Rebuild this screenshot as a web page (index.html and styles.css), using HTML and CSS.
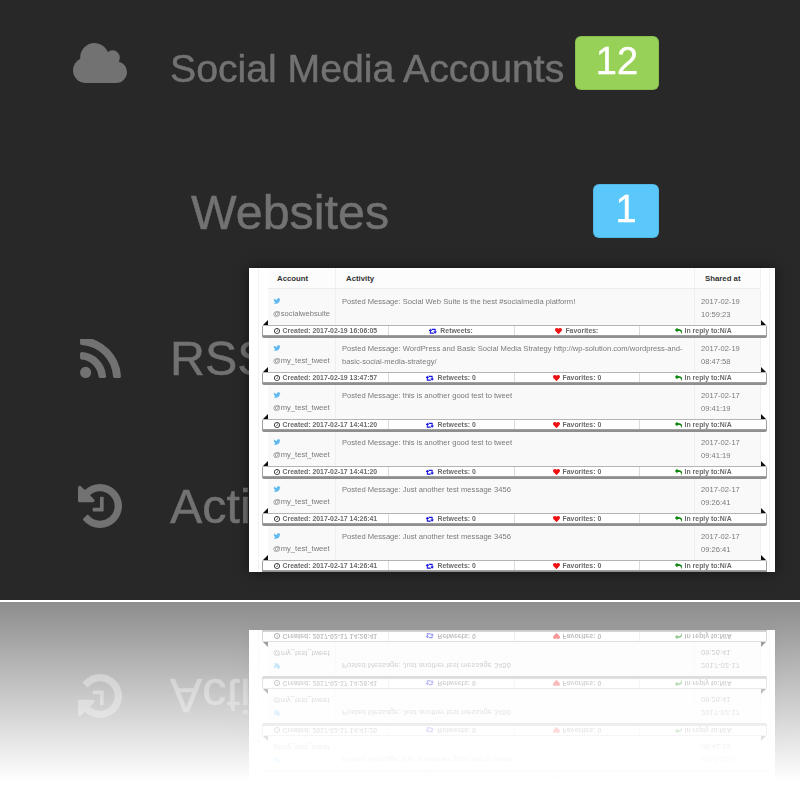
FILE: index.html
```html
<!DOCTYPE html>
<html lang="en">
<head>
    <meta charset="UTF-8">
    <meta name="viewport" content="width=device-width, initial-scale=1.0">
    <title>Social Web Suite</title>
    <link rel="stylesheet" href="styles.css">
</head>
<body>
    <svg class="icon-defs" aria-hidden="true">
        <symbol id="i-cloud" viewBox="0 128 1920 1408" preserveAspectRatio="none"><path d="M1920 1152q0 159-112.500 271.500t-271.500 112.500h-1088q-185 0-316.500-131.500t-131.500-316.500q0-132 71-241.500t187-163.500q-2-28-2-43 0-212 150-362t362-150q158 0 286.500 88t187.500 230q70-62 166-62 106 0 181 75t75 181q0 75-41 138 129 30 213 134.500t84 239.500z"/></symbol>
        <symbol id="i-rss" viewBox="192 192 1408 1344"><path d="M576 1344q0 80-56 136t-136 56-136-56-56-136 56-136 136-56 136 56 56 136zm512 123q2 28-17 48-18 21-47 21h-135q-25 0-43-16.500t-20-41.500q-22-229-184.500-391.500t-391.500-184.500q-25-2-41.500-20t-16.500-43v-135q0-29 21-47 17-17 43-17h5q160 13 306 80.500t259 181.500q114 113 181.500 259t80.500 306zm512 2q2 27-18 47-18 20-46 20h-143q-26 0-44.500-17.500t-19.500-42.500q-12-215-101-408.500t-231.500-336-336-231.500-408.500-102q-25-1-42.500-19.500t-17.500-43.500v-143q0-28 20-46 18-18 44-18h3q262 13 501.500 120t425.500 294q187 186 294 425.500t120 501.500z"/></symbol>
        <symbol id="i-history" viewBox="128 128 1536 1536"><path d="M1664 896q0 156-61 298t-164 245-245 164-298 61q-172 0-327-72.500t-264-204.500q-7-10-6.500-22.500t8.500-20.500l137-138q10-9 25-9 16 2 23 12 73 95 179 147t225 52q104 0 198.500-40.500t163.500-109.500 109.500-163.500 40.500-198.500-40.500-198.500-109.500-163.500-163.500-109.500-198.500-40.500q-98 0-188 35.500t-160 101.500l137 138q31 30 14 69-17 40-59 40h-448q-26 0-45-19t-19-45v-448q0-42 40-59 39-17 69 14l130 129q107-101 244.500-156.500t284.500-55.500q156 0 298 61t245 164 164 245 61 298zm-640-288v448q0 14-9 23t-23 9h-320q-14 0-23-9t-9-23v-64q0-14 9-23t23-9h224v-352q0-14 9-23t23-9h64q14 0 23 9t9 23z"/></symbol>
        <symbol id="i-twitter" viewBox="0 0 1792 1792"><path d="M1684 408q-67 98-162 167 1 14 1 42 0 130-38 259.500t-115.500 248.500-184.500 210.500-258 146-323 54.500q-271 0-496-145 35 4 78 4 225 0 401-138-105-2-188-64.500t-114-159.500q33 5 61 5 43 0 85-11-112-23-185.500-111.500t-73.500-205.500v-4q68 38 146 41-66-44-105-115t-39-154q0-88 44-163 121 149 294.500 238.500t371.500 99.500q-8-38-8-74 0-134 94.500-228.500t228.500-94.500q140 0 236 102 109-21 205-78-37 115-142 178 91-10 182-49z"/></symbol>
        <symbol id="i-clock" viewBox="128 128 1536 1536"><path d="M1024 544v448q0 14-9 23t-23 9h-320q-14 0-23-9t-9-23v-64q0-14 9-23t23-9h224v-352q0-14 9-23t23-9h64q14 0 23 9t9 23zm416 352q0-148-73-273t-198-198-273-73-273 73-198 198-73 273 73 273 198 198 273 73 273-73 198-198 73-273zm224 0q0 209-103 385.500t-279.500 279.500-385.500 103-385.500-103-279.500-279.500-103-385.500 103-385.500 279.500-279.500 385.500-103 385.500 103 279.500 279.500 103 385.500z"/></symbol>
        <symbol id="i-retweet" viewBox="0 256 1920 1280"><path d="M1216 1504q0 13-9.500 22.500t-22.500 9.500h-960q-8 0-13.500-2t-9-7-5.500-8-3-11.500-1-11.500v-600h-192q-26 0-45-19t-19-45q0-24 15-41l320-384q19-22 49-22t49 22l320 384q15 17 15 41 0 26-19 45t-45 19h-192v384h576q16 0 25 11l160 192q7 10 7 21zm640-416q0 24-15 41l-320 384q-20 23-49 23t-49-23l-320-384q-15-17-15-41 0-26 19-45t45-19h192v-384h-576q-16 0-25-12l-160-192q-7-9-7-20 0-13 9.500-22.500t22.500-9.500h960q8 0 13.500 2t9 7 5.500 8.500 3 11.500 1 11v600h192q26 0 45 19t19 45z"/></symbol>
        <symbol id="i-heart" viewBox="0 128 1792 1536"><path d="M896 1664q-26 0-44-18l-624-602q-10-8-27.500-26t-55.500-65.500-68-97.500-53.500-121-23.500-138q0-220 127-344t351-124q62 0 126.500 21.500t120 58 95.500 68.500 76 68q36-36 76-68t95.500-68.500 120-58 126.500-21.500q224 0 351 124t127 344q0 221-229 450l-623 600q-18 18-44 18z"/></symbol>
        <symbol id="i-reply" viewBox="0 128 1792 1536"><path d="M1792 1120q0 166-127 451-3 7-10.500 24t-13.500 30-13 22q-12 17-28 17-15 0-23.500-10t-8.500-25q0-9 2.500-26.500t2.500-23.500q5-68 5-123 0-101-17.500-181t-48.500-138.500-80-101-105.500-69.500-133-42.500-154-21.500-175.500-6h-224v256q0 26-19 45t-45 19-45-19l-512-512q-19-19-19-45t19-45l512-512q19-19 45-19t45 19 19 45v256h224q713 0 875 403 53 134 53 333z"/></symbol>
    </svg>

    <div class="stage" id="stage">
        <ul class="side-menu">
            <li class="menu-row">
                <svg class="menu-icon cloud"><use href="#i-cloud"/></svg>
                <span class="menu-label label-small">Social Media Accounts</span>
                <span class="badge badge-green">12</span>
            </li>
            <li class="menu-row">
                <span class="menu-label label-sub">Websites</span>
                <span class="badge badge-blue">1</span>
            </li>
            <li class="menu-row">
                <svg class="menu-icon rss"><use href="#i-rss"/></svg>
                <span class="menu-label">RSS</span>
            </li>
            <li class="menu-row">
                <svg class="menu-icon history"><use href="#i-history"/></svg>
                <span class="menu-label">Activity</span>
            </li>
        </ul>

        <div class="shot">
            <div class="shot-inner">
                <div class="activity-head">
                    <div class="cell-account">Account</div>
                    <div class="cell-message">Activity</div>
                    <div class="cell-date">Shared at</div>
                </div>
                <div id="activity-rows"></div>
            </div>
        </div>
    </div>

    <div class="reflection" id="reflection" aria-hidden="true"></div>

    <script src="script.js"></script>
</body>
</html>
```

FILE: styles.css
```css
* {
    box-sizing: border-box;
}

body {
    margin: 0;
    background-color: #ffffff;
    font-family: "Liberation Sans", Arial, sans-serif;
    height: 798px;
    overflow: hidden;
}

.icon-defs {
    display: none;
}

.stage {
    position: relative;
    height: 600px;
    background-color: #282828;
    padding-top: 26px;
    overflow: hidden;
}

/* side menu behind the screenshot */
.side-menu {
    list-style: none;
    margin: 0;
    padding: 0 141px 0 73px;
    display: flex;
    flex-direction: column;
    gap: 73.5px;
    filter: blur(0.6px);
}

.menu-row {
    display: flex;
    align-items: center;
    height: 74px;
    color: #727272;
    font-size: 48.4px;
    -webkit-text-stroke: 0.5px #727272;
}

.menu-icon {
    flex: none;
    fill: #727272;
}

.cloud {
    width: 54px;
    height: 40px;
    margin-right: 43px;
}

.rss {
    width: 41px;
    height: 39px;
    margin-left: 7px;
    margin-right: 49px;
}

.history {
    width: 44px;
    height: 44px;
    margin-left: 5px;
    margin-right: 48px;
}

.label-small {
    font-size: 39.2px;
    padding-top: 12px;
}

.label-sub {
    margin-left: 118px;
    padding-top: 2px;
}

.badge {
    margin-left: auto;
    height: 54px;
    border: 1px solid rgba(0, 0, 0, 0.08);
    border-radius: 6px;
    color: #ffffff;
    font-size: 38px;
    line-height: 48px;
    text-align: center;
    -webkit-text-stroke: 0.4px #ffffff;
}

.badge-green {
    width: 84px;
    background-color: #97d158;
}

.badge-blue {
    width: 66px;
    background-color: #5ac8fa;
}

/* screenshot lying over the menu */
.shot {
    position: absolute;
    left: 249px;
    top: 268px;
    width: 526px;
    height: 304px;
    padding: 0 5px 0 9px;
    background-color: #ffffff;
    box-shadow: 0 0 12px rgba(0, 0, 0, 0.5);
    overflow: hidden;
}

.shot-inner {
    height: 100%;
    padding: 0 9px;
    border-left: 1px solid #f2f2f2;
    border-right: 1px solid #f2f2f2;
    font-size: 7.6px;
    line-height: 12.5px;
    color: #7a7a7a;
    filter: blur(0.45px);
}

.activity-head,
.activity-row {
    display: grid;
    grid-template-columns: 68px 359px 66px;
}

.activity-head {
    height: 21px;
    align-items: center;
    border-bottom: 1px solid #ececec;
    background-color: #fcfcfc;
    font-size: 7.8px;
    font-weight: bold;
    color: #333333;
}

.activity-head .cell-account {
    padding-left: 9px;
}

.activity-head .cell-message {
    padding-left: 10px;
}

.activity-head .cell-date {
    padding-left: 10px;
}

.activity-head > div {
    line-height: 21px;
    height: 20px;
    border-right: 1px solid #f0f0f0;
}

.activity-row {
    height: 36px;
    background-color: #f9f9f9;
}

.activity-row > div {
    padding-top: 7px;
    border-right: 1px solid #efefef;
}

.cell-account {
    padding-left: 5px;
}

.activity-row .cell-message {
    padding-left: 6px;
    padding-right: 8px;
}

.activity-row .cell-date {
    padding-left: 6px;
}

.tweet-icon {
    display: block;
    width: 8px;
    height: 8px;
    margin-top: 1px;
    margin-bottom: 3px;
    fill: #5fb8f0;
}

/* strip under each tweet */
.meta-bar {
    position: relative;
    display: grid;
    grid-template-columns: repeat(4, 1fr);
    height: 11px;
    margin: 0 -7px 0 -6px;
    background-color: #ffffff;
    border: 1px solid #a0a0a0;
    border-top-color: #b4b4b4;
    border-radius: 2px;
    box-shadow: 0 2px 0 #8f8f8f;
    font-size: 6.9px;
    font-weight: bold;
    line-height: 9px;
    color: #6a6a6a;
}

.meta-bar::before,
.meta-bar::after {
    content: "";
    position: absolute;
    top: -6px;
    width: 0;
    height: 0;
    border-bottom: 5px solid #111111;
}

.meta-bar::before {
    left: 0;
    border-left: 5px solid transparent;
}

.meta-bar::after {
    right: 0;
    border-right: 5px solid transparent;
}

.meta-cell {
    display: flex;
    align-items: center;
    justify-content: center;
    gap: 3px;
    border-right: 1px solid #dcdcdc;
    white-space: nowrap;
}

.meta-cell:last-child {
    border-right: none;
}

.meta-icon {
    flex: none;
    width: 6px;
    height: 6px;
}

.meta-clock {
    fill: #333333;
}

.meta-retweet {
    width: 8px;
    fill: #1515e0;
}

.meta-heart {
    width: 7px;
    fill: #ee1111;
}

.meta-reply {
    width: 7px;
    fill: #118811;
}

/* mirrored copy under the page */
.reflection {
    position: relative;
    height: 196px;
    margin-top: 2px;
    overflow: hidden;
}

.reflection .stage {
    transform: scaleY(-1);
}

.reflection::after {
    content: "";
    position: absolute;
    inset: 0;
    background: linear-gradient(to bottom, rgba(255, 255, 255, 0.47) 0%, #ffffff 91%);
}
```

FILE: script.js
```js
var tweets = [
    { user: '@socialwebsuite', message: 'Posted Message: Social Web Suite is the best #socialmedia platform!', day: '2017-02-19', time: '10:59:23', created: '2017-02-19 16:06:05', retweets: '', favorites: '' },
    { user: '@my_test_tweet', message: 'Posted Message: WordPress and Basic Social Media Strategy http://wp-solution.com/wordpress-and-basic-social-media-strategy/', day: '2017-02-19', time: '08:47:58', created: '2017-02-19 13:47:57', retweets: ' 0', favorites: ' 0' },
    { user: '@my_test_tweet', message: 'Posted Message: this is another good test to tweet', day: '2017-02-17', time: '09:41:19', created: '2017-02-17 14:41:20', retweets: ' 0', favorites: ' 0' },
    { user: '@my_test_tweet', message: 'Posted Message: this is another good test to tweet', day: '2017-02-17', time: '09:41:19', created: '2017-02-17 14:41:20', retweets: ' 0', favorites: ' 0' },
    { user: '@my_test_tweet', message: 'Posted Message: Just another test message 3456', day: '2017-02-17', time: '09:26:41', created: '2017-02-17 14:26:41', retweets: ' 0', favorites: ' 0' },
    { user: '@my_test_tweet', message: 'Posted Message: Just another test message 3456', day: '2017-02-17', time: '09:26:41', created: '2017-02-17 14:26:41', retweets: ' 0', favorites: ' 0' }
];

var rowsBox = document.getElementById('activity-rows');

tweets.forEach(function(tweet) {
    var row = document.createElement('div');
    row.innerHTML = `
        <div class="activity-row">
            <div class="cell-account">
                <svg class="tweet-icon"><use href="#i-twitter"/></svg>
                ${tweet.user}
            </div>
            <div class="cell-message">${tweet.message}</div>
            <div class="cell-date">${tweet.day}<br>${tweet.time}</div>
        </div>
        <div class="meta-bar">
            <div class="meta-cell"><svg class="meta-icon meta-clock"><use href="#i-clock"/></svg>Created: ${tweet.created}</div>
            <div class="meta-cell"><svg class="meta-icon meta-retweet"><use href="#i-retweet"/></svg>Retweets:${tweet.retweets}</div>
            <div class="meta-cell"><svg class="meta-icon meta-heart"><use href="#i-heart"/></svg>Favorites:${tweet.favorites}</div>
            <div class="meta-cell"><svg class="meta-icon meta-reply"><use href="#i-reply"/></svg>In reply to:N/A</div>
        </div>
    `;
    rowsBox.appendChild(row);
});

// the lower part of the picture is the same page, upside down
var copy = document.getElementById('stage').cloneNode(true);
copy.removeAttribute('id');
copy.querySelector('#activity-rows').removeAttribute('id');
document.getElementById('reflection').appendChild(copy);
```
